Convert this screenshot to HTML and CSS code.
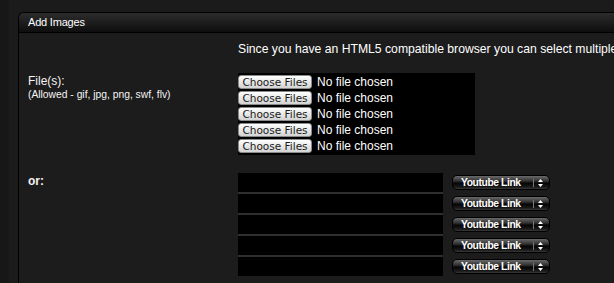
FILE: index.html
```html
<html>
<head>
<link rel="stylesheet" href="styles.css">
</head>
<body>
<div id="container">
<div class="panel">
	<div class="panelHead">Add Images</div>
	<div class="panelBody">
		<div class="note">Since you have an HTML5 compatible browser you can select multiple files at once.</div>

		<div class="formRow">
			<div class="label">
				<div class="labelMain">File(s):</div>
				<div class="labelSub">(Allowed - gif, jpg, png, swf, flv)</div>
			</div>
			<div class="fileBox">
				<div class="fileRow"><button class="pick">Choose Files</button><span class="chosen">No file chosen</span></div>
				<div class="fileRow"><button class="pick">Choose Files</button><span class="chosen">No file chosen</span></div>
				<div class="fileRow"><button class="pick">Choose Files</button><span class="chosen">No file chosen</span></div>
				<div class="fileRow"><button class="pick">Choose Files</button><span class="chosen">No file chosen</span></div>
				<div class="fileRow"><button class="pick">Choose Files</button><span class="chosen">No file chosen</span></div>
			</div>
		</div>

		<div class="formRow linkSection">
			<div class="label">
				<div class="labelOr">or:</div>
			</div>
			<div class="links">
				<div class="linkRow"><input class="linkInput" type="text"><div class="kind"><span>Youtube Link</span><svg class="arrows" width="5" height="8" viewBox="0 0 5 8"><path d="M2.5 0L5 3H0z M2.5 8L5 5H0z" fill="#fff"/></svg></div></div>
				<div class="linkRow"><input class="linkInput" type="text"><div class="kind"><span>Youtube Link</span><svg class="arrows" width="5" height="8" viewBox="0 0 5 8"><path d="M2.5 0L5 3H0z M2.5 8L5 5H0z" fill="#fff"/></svg></div></div>
				<div class="linkRow"><input class="linkInput" type="text"><div class="kind"><span>Youtube Link</span><svg class="arrows" width="5" height="8" viewBox="0 0 5 8"><path d="M2.5 0L5 3H0z M2.5 8L5 5H0z" fill="#fff"/></svg></div></div>
				<div class="linkRow"><input class="linkInput" type="text"><div class="kind"><span>Youtube Link</span><svg class="arrows" width="5" height="8" viewBox="0 0 5 8"><path d="M2.5 0L5 3H0z M2.5 8L5 5H0z" fill="#fff"/></svg></div></div>
				<div class="linkRow"><input class="linkInput" type="text"><div class="kind"><span>Youtube Link</span><svg class="arrows" width="5" height="8" viewBox="0 0 5 8"><path d="M2.5 0L5 3H0z M2.5 8L5 5H0z" fill="#fff"/></svg></div></div>
			</div>
		</div>
	</div>
</div>
</div>
</body>
</html>
```

FILE: styles.css
```css
body
{
	margin: 0;
	background: linear-gradient(to right, #171717 9px, #1b1b1b 9px);
	overflow: hidden;
	font-family: "Liberation Sans", Arial, sans-serif;
	color: #f4f4f4;
}
#container
{
	height: 283px;
	padding: 12px 0 0 18px;
	box-sizing: border-box;
}
.panel
{
	height: 100%;
	background-color: #1c1c1c;
	border-left: 1px solid #000;
	border-top: 1px solid #000;
	border-top-left-radius: 6px;
	overflow: hidden;
	white-space: nowrap;
}
.panelHead
{
	height: 19px;
	line-height: 19px;
	padding-left: 9px;
	font-size: 11px;
	letter-spacing: -0.2px;
	color: #fff;
	background: linear-gradient(#2c2c2c, #0e0e0e);
	border-bottom: 1px solid #000;
}
.panelBody
{
	padding-top: 8px;
}
.note
{
	margin-left: 219px;
	font-size: 12.2px;
	line-height: 16px;
	color: #fff;
}
.formRow
{
	display: flex;
	margin-top: 16px;
}
.linkSection
{
	margin-top: 18px;
}
.label
{
	width: 210px;
	padding-left: 9px;
	flex-shrink: 0;
}
.labelMain
{
	font-size: 12px;
	line-height: 15px;
	padding-top: 1px;
}
.labelSub
{
	font-size: 10.3px;
	line-height: 12px;
}
.labelOr
{
	font-size: 12px;
	font-weight: bold;
	line-height: 14px;
	padding-top: 1px;
}
.fileBox
{
	width: 237px;
	padding: 1px 0;
	background-color: #000;
}
.fileRow
{
	display: flex;
	align-items: center;
	height: 16px;
}
.pick
{
	width: 74px;
	height: 14px;
	margin: 0;
	padding: 0;
	border: 1px solid #8a8a8a;
	border-radius: 3px;
	background: linear-gradient(#ffffff, #e6e6e6 55%, #d4d4d4);
	font-family: "DejaVu Sans", Verdana, sans-serif;
	font-size: 10.5px;
	line-height: 12px;
	color: #1a1a1a;
}
.chosen
{
	margin-left: 5px;
	font-size: 12px;
	color: #fff;
}
.links
{
	display: flex;
	flex-direction: column;
	gap: 2px;
}
.linkRow
{
	display: flex;
	align-items: center;
	height: 19px;
}
.linkRow + .linkRow .linkInput
{
	box-shadow: 0 -2px 0 #2f2f2f;
}
.linkInput
{
	width: 205px;
	height: 19px;
	margin: 0;
	padding: 0;
	border: none;
	background-color: #000;
}
.kind
{
	display: flex;
	align-items: center;
	width: 98px;
	height: 15px;
	margin-left: 9px;
	box-sizing: border-box;
	border: 1px solid #000;
	border-radius: 5px;
	background: linear-gradient(#6a6a6a, #2e2e2e 40%, #050505 55%, #1a1a1a 85%, #3a3a3a);
	font-size: 10.3px;
	font-weight: bold;
	letter-spacing: -0.4px;
	color: #fff;
}
.kind span
{
	flex: 1;
	padding-left: 8px;
}
.arrows
{
	padding-left: 4px;
	margin-right: 6px;
	border-left: 1px solid #777;
}
```
